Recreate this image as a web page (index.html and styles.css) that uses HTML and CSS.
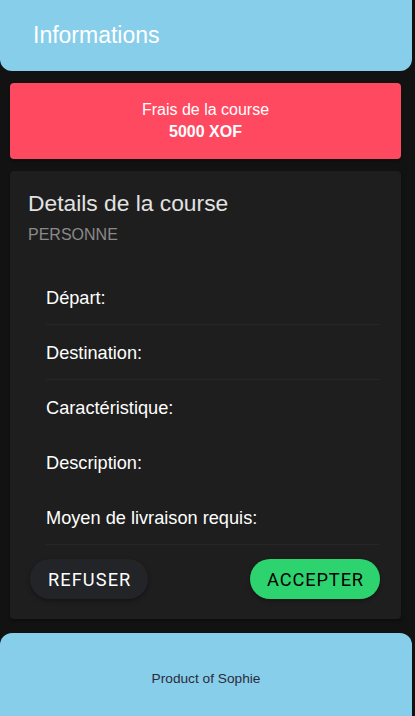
FILE: index.html
```html
<!DOCTYPE html>
<html lang="fr">
<head>
<meta charset="utf-8">
<title>Informations</title>
<link rel="stylesheet" href="styles.css">
</head>
<body>
<div class="app">
  <header class="topbar">
    <h1 class="topbar-title">Informations</h1>
  </header>
  <main class="content">
    <section class="fee-card">
      <div class="fee-label">Frais de la course</div>
      <div class="fee-amount">5000 XOF</div>
    </section>
    <section class="details-card">
      <div class="details-header">
        <h2 class="details-title">Details de la course</h2>
        <div class="details-subtitle">PERSONNE</div>
      </div>
      <ul class="details-list">
        <li class="details-item lined">Départ:</li>
        <li class="details-item lined">Destination:</li>
        <li class="details-item">Caractéristique:</li>
        <li class="details-item">Description:</li>
        <li class="details-item lined">Moyen de livraison requis:</li>
      </ul>
      <div class="actions">
        <button class="btn btn-dark">REFUSER</button>
        <button class="btn btn-success">ACCEPTER</button>
      </div>
    </section>
  </main>
  <footer class="footer">
    <div class="footer-text">Product of Sophie</div>
  </footer>
</div>
</body>
</html>
```

FILE: styles.css
```css
html, body {
  margin: 0;
  padding: 0;
  background: #121212;
  height: 100%;
  overflow: hidden;
}

body {
  font-family: "Liberation Sans", Arial, sans-serif;
}

.app {
  width: 412px;
  display: flex;
  flex-direction: column;
}

.topbar {
  background: #87ceeb;
  height: 71px;
  border-radius: 0 0 12px 12px;
  display: flex;
  align-items: center;
  padding: 0 33px;
  box-sizing: border-box;
}

.topbar-title {
  margin: 0;
  font-size: 23px;
  font-weight: normal;
  color: #ffffff;
}

.content {
  display: flex;
  flex-direction: column;
  gap: 12px;
  padding: 12px 11px 14px 10px;
}

.fee-card {
  background: #ff4961;
  border-radius: 4px;
  padding: 16px 0 16px;
  text-align: center;
  color: #ffffff;
  font-size: 16px;
  line-height: 22px;
  box-shadow: 0 2px 3px rgba(0, 0, 0, 0.3);
}

.fee-amount {
  font-weight: bold;
}

.details-card {
  background: #1e1e1e;
  border-radius: 4px;
  padding: 18px 21px 20px 18px;
  box-shadow: 0 2px 3px rgba(0, 0, 0, 0.3);
}

.details-title {
  margin: 0;
  font-size: 22.8px;
  line-height: 28px;
  font-weight: normal;
  color: #e2e2e2;
}

.details-subtitle {
  margin-top: 9px;
  font-size: 16px;
  line-height: 18px;
  color: #8a8a8a;
}

.details-list {
  list-style: none;
  margin: 26px 0 0 18px;
  padding: 0;
}

.details-item {
  height: 55px;
  box-sizing: border-box;
  padding-top: 3px;
  display: flex;
  align-items: center;
  font-size: 18.2px;
  color: #ffffff;
  border-bottom: 1px solid transparent;
}

.details-item.lined {
  border-bottom-color: #262626;
}

.actions {
  display: flex;
  justify-content: space-between;
  padding-left: 2px;
  margin-top: 14px;
}

.btn {
  font-family: Roboto, "Liberation Sans", sans-serif;
  font-size: 18.2px;
  letter-spacing: 0.06em;
  height: 40px;
  border: none;
  border-radius: 20px;
  padding: 0 17px 0 18px;
  cursor: pointer;
}

.btn-dark {
  background: #222428;
  color: #ffffff;
  box-shadow: 0 2px 4px rgba(0, 0, 0, 0.35);
}

.btn-success {
  background: #2dd36f;
  color: #000000;
  letter-spacing: 0.05em;
  padding: 0 16px 0 17px;
  box-shadow: 0 2px 4px rgba(0, 0, 0, 0.3);
}

.footer {
  background: #87ceeb;
  border-radius: 12px 12px 0 0;
  padding: 38px 0;
  text-align: center;
}

.footer-text {
  font-size: 13.7px;
  line-height: 16px;
  color: #2b2b3a;
}
```
